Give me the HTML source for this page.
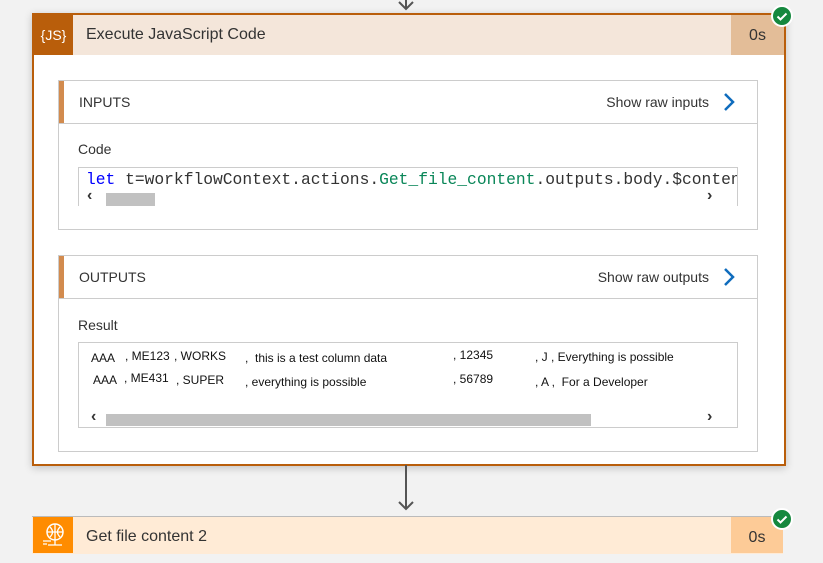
<!DOCTYPE html><html><head><style>
body{margin:0;width:823px;height:563px;background:#f2f2f2;font-family:"Segoe UI","Liberation Sans",sans-serif;position:relative;overflow:hidden;color:#333}
.a{position:absolute}
.card{left:32px;top:13px;width:750px;height:449px;border:2px solid #b95e0b;background:#fff;box-shadow:0 2px 8px rgba(0,0,0,.2)}
.panel{background:#fff;border:1px solid #ccc}
.ph{position:absolute;left:0;top:0;right:0;height:42px;border-bottom:1px solid #ccc}
.bar{position:absolute;left:0;top:0;width:5px;height:42px;background:#d28b4e}
.t{font-size:14px}
.mono{font-family:"Liberation Mono",monospace;font-size:16.3px}
.d{font-family:"Liberation Sans",sans-serif;font-size:12px;color:#111}
</style></head><body>
<svg class="a" style="left:396px;top:0" width="22" height="12"><path d="M10 0v9M3 2l7 7 7-7" stroke="#555" stroke-width="2" fill="none"/></svg>
<div class="a card">
 <div class="a" style="left:0;top:0;width:750px;height:40px;background:#f4e6da"></div>
 <div class="a" style="left:0;top:0;width:39px;height:40px;background:#b95e0b;color:#fff;font-size:14px;line-height:40px;text-align:center">{JS}</div>
 <div class="a" style="left:52px;top:11px;font-size:16px;color:#333">Execute JavaScript Code</div>
 <div class="a" style="left:697px;top:0;width:53px;height:40px;background:#e3bd98;font-size:16px;line-height:42px;text-align:center">0s</div>
 <div class="a panel" style="left:24px;top:65px;width:698px;height:148px">
  <div class="ph"><div class="bar"></div><div class="a t" style="left:20px;top:13px">INPUTS</div><div class="a t" style="right:48px;top:13px">Show raw inputs</div>
  <svg class="a" style="right:22px;top:12px" width="12" height="18"><path d="M2 1l8 8-8 8" stroke="#0f6cbd" stroke-width="2.5" fill="none"/></svg></div>
  <div class="a t" style="left:19px;top:60px">Code</div>
  <div class="a" style="left:19px;top:86px;width:658px;height:38px;border:1px solid #ccc;border-bottom:none;overflow:hidden">
   <div class="a mono" style="left:7px;top:2px;white-space:nowrap"><span style="color:#00f">let</span> t=workflowContext.actions.<span style="color:#098658">Get_file_content</span>.outputs.body.$content</div>
   <div class="a" style="left:8px;top:19px;font-size:16px;font-weight:bold">‹</div>
   <div class="a" style="left:27px;top:25px;width:49px;height:13px;background:#c1c1c1"></div>
   <div class="a" style="left:628px;top:19px;font-size:16px;font-weight:bold">›</div>
  </div>
 </div>
 <div class="a panel" style="left:24px;top:240px;width:698px;height:195px">
  <div class="ph"><div class="bar"></div><div class="a t" style="left:20px;top:13px">OUTPUTS</div><div class="a t" style="right:48px;top:13px">Show raw outputs</div>
  <svg class="a" style="right:22px;top:12px" width="12" height="18"><path d="M2 1l8 8-8 8" stroke="#0f6cbd" stroke-width="2.5" fill="none"/></svg></div>
  <div class="a t" style="left:19px;top:61px">Result</div>
  <div class="a" style="left:19px;top:86px;width:658px;height:84px;border:1px solid #ccc">
   <div class="a d" style="left:12px;top:8px">AAA</div><div class="a d" style="left:46px;top:6px">, ME123</div><div class="a d" style="left:95px;top:6px">, WORKS</div><div class="a d" style="left:166px;top:8px">,&nbsp; this is a test column data</div><div class="a d" style="left:374px;top:5px">, 12345</div><div class="a d" style="left:456px;top:7px">, J , Everything is possible</div>
   <div class="a d" style="left:14px;top:30px">AAA</div><div class="a d" style="left:45px;top:28px">, ME431</div><div class="a d" style="left:97px;top:30px">, SUPER</div><div class="a d" style="left:166px;top:32px">, everything is possible</div><div class="a d" style="left:374px;top:29px">, 56789</div><div class="a d" style="left:456px;top:32px">, A ,&nbsp; For a Developer</div>
   <div class="a" style="left:12px;top:65px;font-size:16px;font-weight:bold">‹</div>
   <div class="a" style="left:27px;top:71px;width:485px;height:12px;background:#c1c1c1"></div>
   <div class="a" style="left:628px;top:65px;font-size:16px;font-weight:bold">›</div>
  </div>
 </div>
</div>
<svg class="a" style="left:771px;top:5px" width="22" height="22"><circle cx="11" cy="11" r="10" fill="#15883e" stroke="#fff" stroke-width="2"/><path d="M6.5 11.5l3 3 6-6" stroke="#fff" stroke-width="2" fill="none"/></svg>
<svg class="a" style="left:396px;top:465px" width="22" height="46"><path d="M10 0v44M3 37l7 7 7-7" stroke="#555" stroke-width="2" fill="none"/></svg>
<div class="a" style="left:32px;top:516px;width:751px;height:37px;background:#ffebd6;border-top:1px solid #bbb"></div>
<div class="a" style="left:33px;top:517px;width:40px;height:36px;background:#ff8c00"></div>
<svg class="a" style="left:40px;top:521px" width="26" height="28"><circle cx="15" cy="11" r="8" fill="none" stroke="#fff" stroke-width="1.5"/><path d="M7 11h16M15 3v16M10 6q5 5 0 10M20 6q-5 5 0 10M15 19v5M8 24h14M3 20h8M3 23h4" stroke="#fff" stroke-width="1.3" fill="none"/></svg>
<div class="a" style="left:86px;top:528px;font-size:16px;color:#333">Get file content 2</div>
<div class="a" style="left:731px;top:517px;width:52px;height:36px;background:#fdcb97;font-size:16px;line-height:42px;text-align:center">0s</div>
<svg class="a" style="left:771px;top:508px" width="22" height="22"><circle cx="11" cy="11" r="10" fill="#15883e" stroke="#fff" stroke-width="2"/><path d="M6.5 11.5l3 3 6-6" stroke="#fff" stroke-width="2" fill="none"/></svg>
</body></html>
